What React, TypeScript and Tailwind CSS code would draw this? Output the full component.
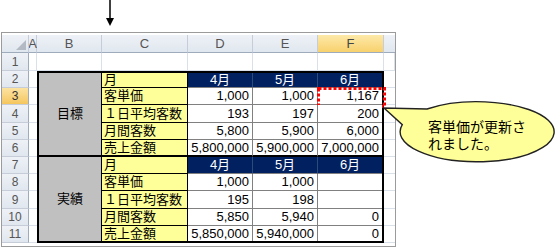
import React from 'react';

type SheetRow = { label: string; vals: string[]; head?: boolean };

const rows: SheetRow[] = [
  { label: '月', vals: ['4月', '5月', '6月'], head: true },
  { label: '客単価', vals: ['1,000', '1,000', '1,167'] },
  { label: '１日平均客数', vals: ['193', '197', '200'] },
  { label: '月間客数', vals: ['5,800', '5,900', '6,000'] },
  { label: '売上金額', vals: ['5,800,000', '5,900,000', '7,000,000'] },
  { label: '月', vals: ['4月', '5月', '6月'], head: true },
  { label: '客単価', vals: ['1,000', '1,000', ''] },
  { label: '１日平均客数', vals: ['195', '198', ''] },
  { label: '月間客数', vals: ['5,850', '5,940', '0'] },
  { label: '売上金額', vals: ['5,850,000', '5,940,000', '0'] },
];

const colHeads = ['A', 'B', 'C', 'D', 'E', 'F'];

const RowHead = ({ n, active }: { n: number; active?: boolean }) => (
  <div
    className={`flex items-center justify-center border-r border-b border-r-[#9eabbd] border-b-[#c6cdd8] text-[12px] ${
      active
        ? 'bg-linear-to-b from-[#fbe3a0] to-[#f5c65e] text-[#333]'
        : 'bg-linear-to-b from-[#eef2f7] to-[#e1e7ef] text-[#555]'
    }`}
  >
    {n}
  </div>
);

const GridCell = () => <div className="bg-white border-r border-b border-[#dae0ea]" />;

function Table() {
  return (
    <div className="col-start-3 col-end-8 row-start-3 row-end-13 border-2 border-black grid grid-cols-[63px_86px_65px_65px_64px] grid-rows-[15px_17px_18px_17px_17px_17px_17px_18px_17px_15px]">
      <div className="col-start-1 row-start-1 row-span-5 bg-[#c0c0c0] border-r border-r-black border-b-2 border-b-black flex items-center justify-center">
        目標
      </div>
      <div className="col-start-1 row-start-6 row-span-5 bg-[#c0c0c0] border-r border-r-black flex items-center justify-center">
        実績
      </div>
      {rows.map((r, i) => (
        <React.Fragment key={i}>
          <div
            className={`col-start-2 bg-[#ffff99] border-r border-r-black pl-[2px] flex items-center whitespace-nowrap ${
              i === 4 ? 'border-b-2 border-b-black' : i === 9 ? '' : 'border-b border-b-black'
            }`}
          >
            {r.label}
          </div>
          {r.vals.map((v, j) => (
            <div
              key={j}
              className={`relative flex items-center whitespace-nowrap ${
                r.head ? 'bg-[#002060] text-white justify-center' : 'bg-white justify-end pr-[3px]'
              } ${j < 2 ? (r.head ? 'border-r border-r-[#2d4a7c]' : 'border-r border-r-[#808080]') : ''} ${
                i === 4 ? 'border-b-2 border-b-black' : i === 9 ? '' : 'border-b border-b-[#808080]'
              }`}
            >
              {v}
              {i === 1 && j === 2 && (
                <svg className="absolute -left-[1px] -top-[1px] overflow-visible" width="69" height="21">
                  <rect
                    x="1.5"
                    y="1.5"
                    width="66"
                    height="18"
                    fill="none"
                    stroke="#ff0000"
                    strokeWidth="3"
                    strokeDasharray="3 2"
                  />
                </svg>
              )}
            </div>
          ))}
        </React.Fragment>
      ))}
    </div>
  );
}

function Callout() {
  return (
    <div className="absolute left-[380px] top-[95px] w-[177px] h-[75px]">
      <svg width="177" height="75" className="absolute left-0 top-0">
        <path
          d="M47 14 L4 13 L22.3 29.7 A77 30 0 1 0 47 14 Z"
          fill="#ffff99"
          stroke="#222"
          strokeWidth="1.4"
        />
      </svg>
      <div className="absolute left-[48px] top-[24px] text-[14px] leading-[17px] text-black whitespace-nowrap">
        客単価が更新さ
        <br />
        れました。
      </div>
    </div>
  );
}

export default function App() {
  return (
    <div className="relative w-[557px] h-[249px] overflow-hidden bg-white text-[13px] text-black font-['Liberation_Sans','Noto_Sans_CJK_JP',sans-serif]">
      {/* arrow above column C */}
      <svg width="12" height="32" className="block ml-[104px]">
        <line x1="6" y1="0" x2="6" y2="19" stroke="#000" strokeWidth="1.5" />
        <polygon points="2,18 10,18 6,26" fill="#000" />
      </svg>

      <div className="ml-px w-[395px] border border-[#9b9b9b] pt-[2px] pb-[3px] bg-white">
        <div className="grid grid-cols-[27px_8px_65px_86px_65px_65px_66px_11px] grid-rows-[18px_18px_17px_17px_18px_17px_17px_17px_17px_18px_17px_17px]">
          {/* column header row */}
          <div className="relative bg-linear-to-b from-[#eef2f7] to-[#e1e7ef] border-r border-b border-r-[#c6cdd8] border-b-[#9eabbd]">
            <svg width="10" height="10" className="absolute right-[2px] bottom-[2px]">
              <polygon points="10,0 10,10 0,10" fill="#b3bac4" />
            </svg>
          </div>
          {colHeads.map((c) => (
            <div
              key={c}
              className={`flex items-center justify-center border-r border-b border-r-[#c6cdd8] border-b-[#9eabbd] text-[13px] ${
                c === 'F'
                  ? 'bg-linear-to-b from-[#fde9a8] to-[#f8d16c] text-[#444]'
                  : 'bg-linear-to-b from-[#eef2f7] to-[#e1e7ef] text-[#555]'
              }`}
            >
              {c}
            </div>
          ))}
          <div className="bg-linear-to-b from-[#eef2f7] to-[#e1e7ef] border-b border-b-[#9eabbd]" />

          {/* row 1 */}
          <RowHead n={1} />
          <GridCell />
          <GridCell />
          <GridCell />
          <GridCell />
          <GridCell />
          <GridCell />
          <GridCell />

          <Table />

          {/* rows 2-11: row heads, column A, column G */}
          {rows.map((_, i) => (
            <React.Fragment key={i}>
              <RowHead n={i + 2} active={i === 1} />
              <div className="bg-white border-b border-[#dae0ea]" />
              <div className="bg-white border-b border-[#dae0ea]" />
            </React.Fragment>
          ))}
        </div>
      </div>

      <Callout />
    </div>
  );
}
